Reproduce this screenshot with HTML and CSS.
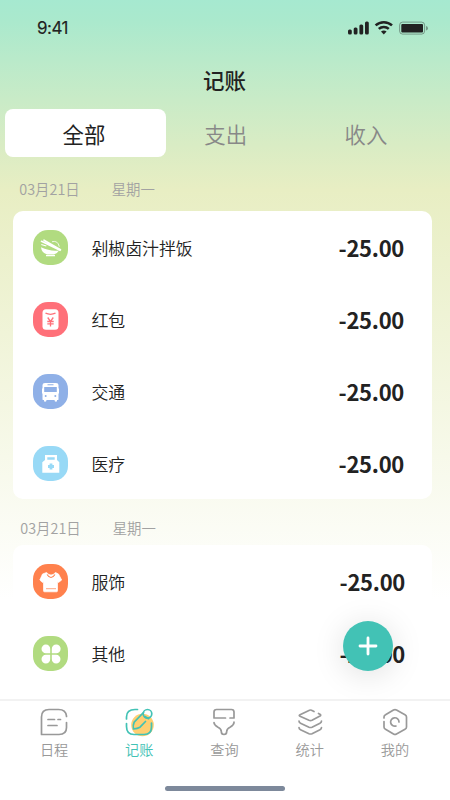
FILE: index.html
```html
<!DOCTYPE html>
<html lang="zh-CN">
<head>
<meta charset="utf-8">
<title>记账</title>
<link rel="stylesheet" href="styles.css">
</head>
<body>
<div class="app">
  <header class="status">
    <span class="time">9:41</span>
    <svg class="signals" width="82" height="16" viewBox="0 0 82 16">
      <g fill="#222"><rect x="0" y="9.500" width="3.800" height="5" rx="1.500"/><rect x="5.700" y="7.500" width="3.800" height="7" rx="1.500"/><rect x="11.400" y="4.500" width="3.800" height="10" rx="1.500"/><rect x="17" y="1.500" width="3.800" height="13" rx="1.500"/></g>
      <g fill="none" stroke="#222" stroke-width="2.500"><path d="M27.600 5.400a12 12 0 0 1 16.400 0"/><path d="M30.800 8.900a7.300 7.300 0 0 1 10 0"/></g>
      <path d="M33 11.500q2.800-2.200 5.600 0L35.800 14.500z" fill="#222"/>
      <rect x="51.600" y="2.100" width="25" height="12" rx="3" fill="none" stroke="#222" stroke-opacity=".4"/>
      <rect x="53.300" y="3.900" width="21.700" height="8.500" rx="1" fill="#222"/>
      <path d="M78 6q2 .5 2 2.200t-2 2.200z" fill="#222" opacity=".4"/>
    </svg>
  </header>
  <h1 class="title">记账</h1>
  <nav class="tabs"><a class="tab active">全部</a><a class="tab">支出</a><a class="tab">收入</a></nav>
  <main>
    <div class="date"><span>03月21日</span><span>星期一</span></div>
    <section class="card">
      <div class="row">
        <svg class="icon green" viewBox="0 0 35 35"><path d="M8 17.300q9.500 4.500 18 3.200-1.500 2.700-5 4h-7q-5.500-1.800-6-7.200z" fill="#fff"/><path d="M13 25.700h9" stroke="#fff" stroke-width="1.200"/><path d="M19 11.700q6-1.500 7.300 5" fill="none" stroke="#fff" stroke-width=".8"/><path d="M11 10.200l16.500 9.600M8.500 11.300l18.500 9" stroke="#fff" stroke-width="1.600" stroke-linecap="round"/><path d="M8.300 14.500l5 1.500" stroke="#fff" stroke-width="1.300"/></svg>
        <span class="name">剁椒卤汁拌饭</span><span class="amount">-25.00</span>
      </div>
      <div class="row">
        <svg class="icon red" viewBox="0 0 35 35"><rect x="9.500" y="7.200" width="16" height="20.600" rx="3.500" fill="#fff"/><path d="M12.500 11.200q5 2.200 10 0M14.700 15.500l2.800 3.800 2.800-3.800M14.300 19.500h6.400M14.300 21.800h6.400M17.500 19v5.500" fill="none" stroke="#ff7079" stroke-width="1.300"/></svg>
        <span class="name">红包</span><span class="amount">-25.00</span>
      </div>
      <div class="row">
        <svg class="icon blue" viewBox="0 0 35 35"><path d="M12 9h11q2.500 0 2.500 2v14.500q0 .5-1.500.5v1q0 .7-1.200.7T21.500 26h-8q0 1.700-1.300 1.700T11 27v-1q-1.500 0-1.500-.5V11q0-2 2.500-2zM9 14.500h1v5H9zM25 14.500h1v5h-1z" fill="#fff"/><path d="M11.200 13h12.600v5H11.200zM14.500 10.300h6v1h-6z" fill="#8fb0e7"/><circle cx="12.700" cy="22" r="1" fill="#8fb0e7"/><circle cx="22.300" cy="22" r="1" fill="#8fb0e7"/></svg>
        <span class="name">交通</span><span class="amount">-25.00</span>
      </div>
      <div class="row">
        <svg class="icon sky" viewBox="0 0 35 35"><path d="M12 9h12v5l2.300 2.200V26.800h-17V16.200L12 14z" fill="#fff"/><path d="M14.300 11.300h7.400v2.400h-7.400z" fill="#98d9f6"/><path d="M18 17.500v6M15 20.500h6" stroke="#98d9f6" stroke-width="2.800"/></svg>
        <span class="name">医疗</span><span class="amount">-25.00</span>
      </div>
    </section>
    <div class="date second"><span>03月21日</span><span>星期一</span></div>
    <section class="card later">
      <div class="row">
        <svg class="icon orange" viewBox="0 0 35 35"><path d="M13.500 8.500Q18 13.500 22.500 8.500l3 1.500 3.200 6-3.200 2.500-1-.7v9q0 1-1 1h-12q-1 0-1-1v-9l-1 .7-2.700-2.500 2.700-6z" fill="#fff" stroke="#fff" stroke-width=".7" stroke-linejoin="round"/><path d="M14 10.500q4 6 8 0" fill="none" stroke="#ff814d" stroke-width="1.100"/><path d="M13 24.700h10" stroke="#ffb89b" stroke-width="1.200"/></svg>
        <span class="name">服饰</span><span class="amount">-25.00</span>
      </div>
      <div class="row">
        <svg class="icon green" viewBox="0 0 35 35"><path d="M12.700 8.500a4.300 4.300 0 0 1 4.500 4.500v4.200H13a4.350 4.350 0 1 1-.3-8.700zM23.300 8.500a4.350 4.350 0 1 1 0 8.700h-4.500V13a4.400 4.400 0 0 1 4.500-4.500zM13 18.800h4.200V23a4.350 4.350 0 1 1-4.200-4.200zM18.800 18.800H23a4.350 4.350 0 1 1-4.200 4.200z" fill="#fff"/></svg>
        <span class="name">其他</span><span class="amount">-25.00</span>
      </div>
    </section>
  </main>
  <button class="add" aria-label="添加"><svg width="20" height="20" viewBox="0 0 20 20"><path d="M10 2v16M2 10h16" stroke="#fff" stroke-width="2.800" stroke-linecap="round"/></svg></button>
  <footer class="bottom">
    <nav class="menu">
      <a><svg viewBox="0 0 28 28"><path d="M26.500 8.500V8q-.7-6.500-8-6.500H9Q1.500 1.500 1.500 9v17.500H19q7.500 0 7.500-7v-5M8 11.500h6.500M18 11.500h2.500M8 17.500h9"/></svg><span>日程</span></a>
      <a class="on"><svg viewBox="0 0 28 28"><circle class="spot" cx="17.500" cy="17" r="11.300"/><path d="M12.500 1.500H10Q1.500 1.500 1.500 9v2M1.500 15.500v3q0 8 7.500 8h10q7.500 0 7.500-7.500v-4M18.500 4.500l-9.300 9.700q-1.500 3.300-.7 6.800 4-.3 6.500-1.800l5.500-5.700M20 8.500l3.500 2.200"/><circle cx="22.500" cy="5.800" r="4.300"/></svg><span>记账</span></a>
      <a><svg viewBox="0 0 28 28"><path d="M15.500 10H4V4q0-2.500 2.500-2.500h15q2.500 0 2.500 2.500v6h-4M4 14.500q0 2.500 4 4.700 3.300 1.500 3.300 4.300 0 3 2.700 3t2.700-3q0-2.800 3.300-4.300 4-2.200 4-4.700V14"/></svg><span>查询</span></a>
      <a><svg viewBox="0 0 28 28"><path d="M18 3.500l-2.500-1.300q-1-.4-2 0L4 6.700q-1.500.8 0 1.600l9 4q1.500.6 3 0l8-4.300q1.200-.8.300-1.500l-1.800-1M3 13q0 1.500 1.500 2.200l8.500 4q1.500.6 3 0l8-4q1.500-.7 1.500-2.200M3 19.500q0 1.500 1.500 2.200l8.500 4q1.500.6 3 0l8-4q1.500-.7 1.500-2.200"/></svg><span>统计</span></a>
      <a><svg viewBox="0 0 28 28"><path d="M3 10V9q0-1.500 1.500-2.300L12.500 2q1.500-.8 3 0L24 6.700Q25.500 7.500 25.500 9v10q0 1.500-1.500 2.300L15.500 26q-1.500.8-3 0l-8-4.700Q3 20.500 3 19v-5.500M15 18a4.200 4.200 0 1 1 3-4"/></svg><span>我的</span></a>
    </nav>
    <div class="home"></div>
  </footer>
</div>
</body>
</html>
```
FILE: styles.css
```css
* { box-sizing: border-box; }
body { margin: 0; font-family: "Noto Sans CJK SC", sans-serif; color: #222; }
.app { position: relative; width: 450px; height: 800px; overflow: hidden; display: flex; flex-direction: column; background: linear-gradient(#a6e9d0 0, #aae9cd 20px, #c9ebc7 100px, #d9ecc4 145px, #e8eec3 190px, #fff 600px); }
.status { flex: none; height: 56px; padding: 0 20.5px 0 37px; display: flex; align-items: center; justify-content: space-between; }
.time { font: 400 17px/20px Inter, sans-serif; letter-spacing: -.5px; -webkit-text-stroke: .15px #222; }
.title { flex: none; margin: 0; height: 53px; font-size: 21.5px; line-height: 48px; font-weight: 500; text-align: center; text-indent: -1px; }
.tabs { flex: none; height: 48px; display: grid; grid-template-columns: 161px 119.5px 161px; padding-left: 5px; }
.tab { height: 48px; line-height: 49px; text-align: center; font-size: 21.4px; font-weight: 350; color: #888; }
.tab.active { background: #fff; border-radius: 8px; color: #222; font-weight: 400; text-indent: -3px; }
main { flex: 1; min-height: 0; overflow: hidden; padding: 0 18px 0 13px; }
.date { height: 54px; padding: 3px 0 0 6.3px; display: flex; gap: 32px; font-size: 14.4px; line-height: 57px; font-weight: 350; color: #a2a2a2; }
.date.second { height: 46px; padding: 0 0 0 7.3px; line-height: 58px; }
.card { background: #fff; border-radius: 10px; }
.row { height: 72px; display: flex; align-items: center; padding: 1px 28px 0 20.4px; }
.later .row { padding-right: 27px; }
.icon { width: 35px; height: 35px; margin-right: 23px; border-radius: 15px; }
.green { background: #b1db80; }
.red { background: #ff7079; }
.blue { background: #8fb0e7; }
.sky { background: #98d9f6; }
.orange { background: #ff814d; }
.name { flex: 1; font-size: 16.9px; font-weight: 350; }
.amount { font-size: 22px; line-height: 32px; margin-top: -2px; font-weight: 700; letter-spacing: -.3px; }
.add { position: absolute; left: 343px; top: 621px; width: 50px; height: 50px; border: 0; padding: 0; border-radius: 50%; background: #42c2b5; box-shadow: 0 4px 32px rgba(0,0,0,.13); display: grid; place-items: center; }
.bottom { flex: none; height: 101px; background: #fff; border-top: 2px solid #f2f2f2; display: flex; flex-direction: column; align-items: center; justify-content: space-between; padding-bottom: 9px; position: relative; }
.menu { width: 426px; margin-right: 1px; display: grid; grid-template-columns: repeat(5, 1fr); padding-top: 7px; }
.menu a { display: flex; flex-direction: column; align-items: center; font-size: 14.2px; line-height: 20px; font-weight: 350; color: #999; gap: 3px; }
.menu svg { width: 28px; height: 28px; fill: none; stroke: #999; stroke-width: 1.7; stroke-linecap: round; stroke-linejoin: round; }
.menu .on { color: #42c2b5; }
.menu .on svg { stroke: #42c2b5; overflow: visible; }
.menu .spot { fill: #ffcf71; stroke: none; }
.home { width: 120px; height: 5px; border-radius: 3px; background: #7d899b; }
```
